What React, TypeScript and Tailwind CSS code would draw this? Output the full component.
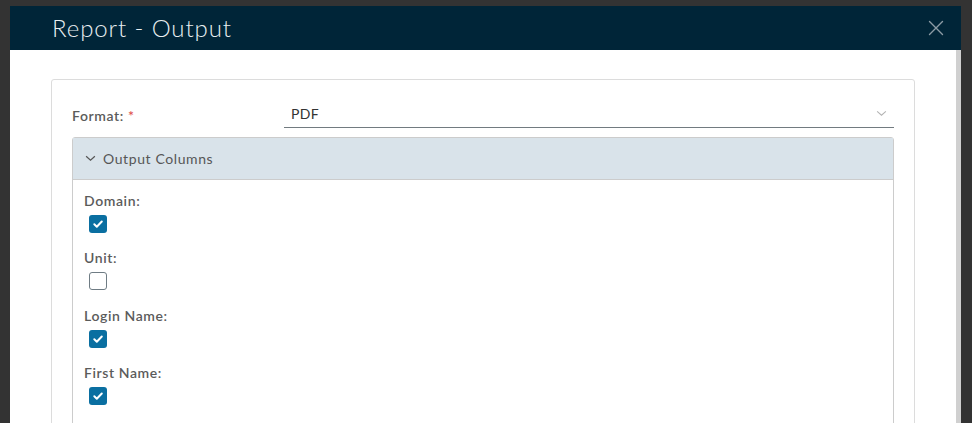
import React from 'react';

const font = { fontFamily: 'Lato, "Open Sans", sans-serif' };

type Col = { label: string; checked: boolean };

const columns: Col[] = [
	{ label: 'Domain:', checked: true },
	{ label: 'Unit:', checked: false },
	{ label: 'Login Name:', checked: true },
	{ label: 'First Name:', checked: true },
];

const Checkbox = ({ checked }: { checked: boolean }) =>
	checked ? (
		<div className="flex h-[18px] w-[18px] items-center justify-center rounded-[3px] bg-[#0a6fa1]">
			<svg viewBox="0 0 12 12" className="h-[12px] w-[12px]" fill="none" stroke="white" strokeWidth="2" strokeLinecap="round" strokeLinejoin="round">
				<path d="M2.3 6.3l2.5 2.4L9.8 3.5" />
			</svg>
		</div>
	) : (
		<div className="h-[18px] w-[18px] rounded-[3px] border border-[#6f7c84] bg-white" />
	);

const App = () => {
	return (
		<div className="h-[423px] w-[972px] overflow-hidden bg-[#333333] pl-[10px] pr-[11px] pt-[6px]" style={font}>
			<div className="flex h-full flex-col bg-white">
				<div className="flex h-[44px] shrink-0 items-center justify-between bg-[#002538] pl-[42px] pr-[17px]">
					<h1 className="text-[24px] font-light tracking-[0.9px] text-[#e8eef1]">Report - Output</h1>
					<svg viewBox="0 0 16 16" className="h-[16px] w-[16px]" fill="none" stroke="#8c9ba5" strokeWidth="1.4" strokeLinecap="round">
						<path d="M1.5 1.5l13 13M14.5 1.5l-13 13" />
					</svg>
				</div>
				<div className="flex min-h-0 flex-1">
					<div className="flex-1 overflow-hidden px-[41px] pt-[29px]">
						<div className="rounded-[3px] border border-[#dcdcdc] px-[20px] pt-[20px]">
							<div className="flex items-start">
								<label className="w-[212px] pt-[5px] text-[14px] font-semibold tracking-[0.6px] text-[#5b5b5b]">
									Format: <span className="text-[#e0524f]">*</span>
								</label>
								<div className="flex h-[28px] flex-1 items-center justify-between border-b border-[#727b80] pl-[7px] pr-[7px]">
									<span className="text-[14px] tracking-[0.4px] text-[#333]">PDF</span>
									<svg viewBox="0 0 12 8" className="h-[7px] w-[11px]" fill="none" stroke="#b3b3b3" strokeWidth="1.2">
										<path d="M1 1.5l5 4.5 5-4.5" />
									</svg>
								</div>
							</div>
							<div className="mt-[9px] rounded-t-[3px] border border-[#cccccc]">
								<div className="flex h-[42px] items-center gap-[7px] border-b border-[#cccccc] bg-[#d9e3ea] pl-[12px]">
									<svg viewBox="0 0 12 8" className="h-[7px] w-[11px]" fill="none" stroke="#565656" strokeWidth="1.4">
										<path d="M1 1.5l5 4.5 5-4.5" />
									</svg>
									<span className="text-[14px] tracking-[0.6px] text-[#565656]">Output Columns</span>
								</div>
								<div className="flex h-[320px] flex-col px-[11px] pt-[13px]">
									{columns.map((c) => (
										<div key={c.label} className="mb-[17.3px] flex flex-col items-start">
											<span className="h-[16px] text-[14px] font-semibold leading-[16px] tracking-[0.6px] text-[#5b5b5b]">{c.label}</span>
											<div className="ml-[5px] mt-[6px]">
												<Checkbox checked={c.checked} />
											</div>
										</div>
									))}
								</div>
							</div>
						</div>
					</div>
					<div className="w-[5px] shrink-0 bg-[#d0d0d0]" />
				</div>
			</div>
		</div>
	);
};

export default App;
